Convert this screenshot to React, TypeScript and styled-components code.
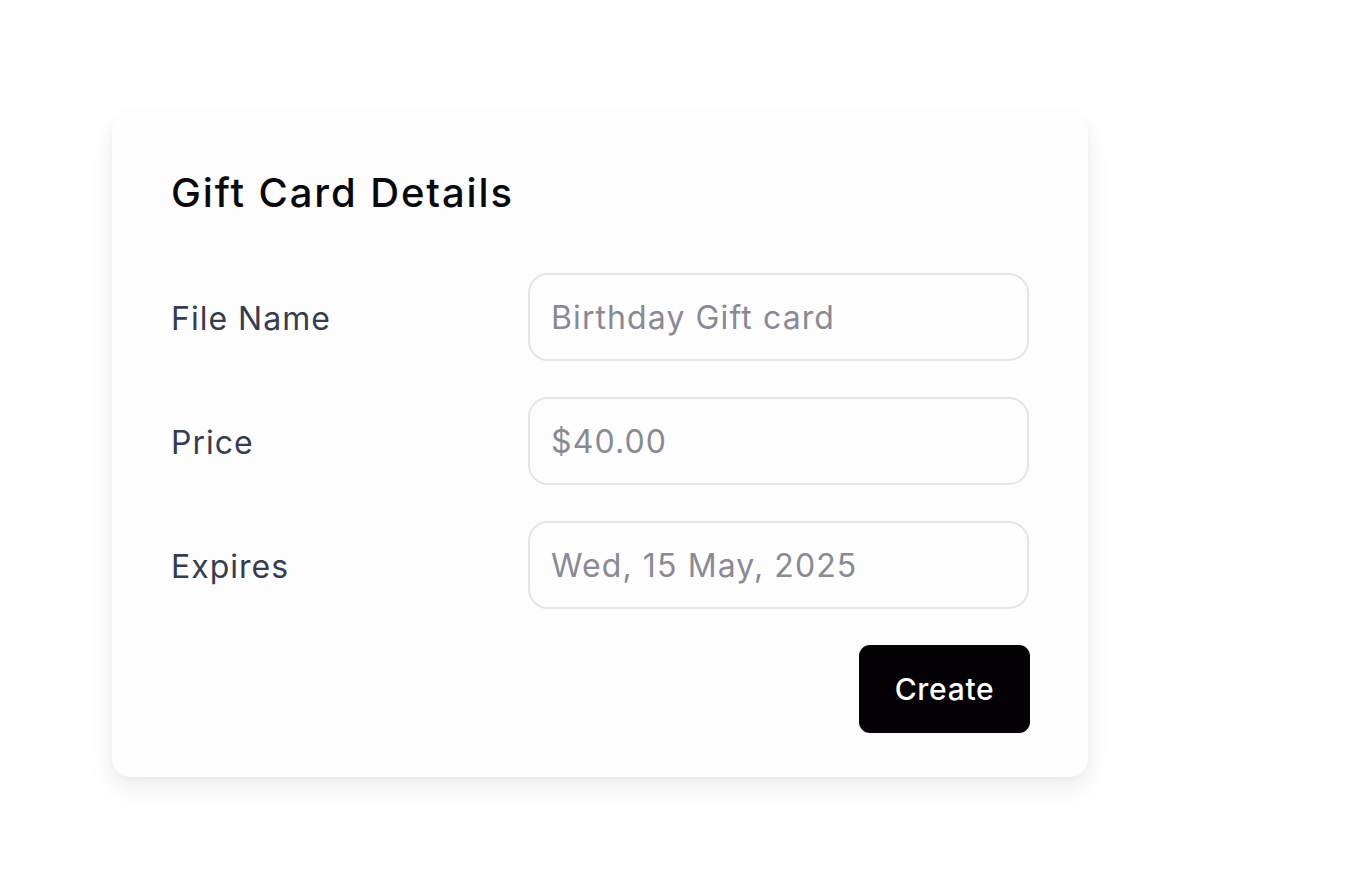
import React from "react";
import styled, { createGlobalStyle } from "styled-components";

const GlobalStyle = createGlobalStyle`
  html, body { margin: 0; padding: 0; background: #ffffff; }
  body { font-family: Inter, "Noto Sans", sans-serif; -webkit-font-smoothing: antialiased; }
  * { box-sizing: border-box; }
`;

const Page = styled.div`
  width: 1361px;
  height: 890px;
  padding: 112px 0 0 112px;
`;

const Card = styled.section`
  width: 976px;
  height: 665px;
  background: #fdfdfe;
  border-radius: 18px;
  box-shadow: 0 12px 28px rgba(20, 20, 50, 0.07), 0 2px 6px rgba(20, 20, 50, 0.03);
  padding: 56px 58px 44px 59px;
  display: flex;
  flex-direction: column;
`;

const Title = styled.h2`
  margin: 0 0 55px;
  font-size: 40px;
  line-height: 50px;
  font-weight: 500;
  color: #09090b;
  letter-spacing: 1.9px;
`;

const Form = styled.div`
  display: flex;
  flex-direction: column;
  gap: 36px;
`;

const Row = styled.div`
  display: grid;
  grid-template-columns: 357px 501px;
  align-items: center;
`;

const Label = styled.label`
  font-size: 32px;
  font-weight: 400;
  color: #363d50;
  letter-spacing: 1px;
  padding-top: 2px;
`;

const Field = styled.div`
  height: 88px;
  border: 2.5px solid #e5e4ea;
  border-radius: 20px;
  background: #fdfdfe;
  display: flex;
  align-items: center;
  padding: 0 21px;
  font-size: 32px;
  letter-spacing: 1.1px;
  color: #8a8994;
`;

const Actions = styled.div`
  display: flex;
  justify-content: flex-end;
  margin-top: 36px;
`;

const Button = styled.button`
  width: 171px;
  height: 88px;
  border: none;
  border-radius: 11px;
  background: #040205;
  color: #ffffff;
  font-family: inherit;
  font-size: 30px;
  font-weight: 500;
  letter-spacing: 0.7px;
  cursor: pointer;
`;

const rows = [
  { label: "File Name", value: "Birthday Gift card" },
  { label: "Price", value: "$40.00" },
  { label: "Expires", value: "Wed, 15 May, 2025" },
];

export default function App() {
  return (
    <>
      <GlobalStyle />
      <Page>
        <Card>
          <Title>Gift Card Details</Title>
          <Form>
            {rows.map((r) => (
              <Row key={r.label}>
                <Label>{r.label}</Label>
                <Field>{r.value}</Field>
              </Row>
            ))}
          </Form>
          <Actions>
            <Button>Create</Button>
          </Actions>
        </Card>
      </Page>
    </>
  );
}
